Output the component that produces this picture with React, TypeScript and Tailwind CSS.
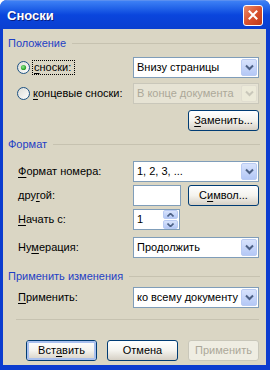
import React from "react";

const U = ({ children }: { children: React.ReactNode }) => (
  <span className="underline underline-offset-[2px] decoration-1">{children}</span>
);

const Chevron = ({ disabled }: { disabled?: boolean }) => (
  <svg width="9" height="7" viewBox="0 0 9 7">
    <path
      d="M1 1.5 L4.5 5 L8 1.5"
      fill="none"
      stroke={disabled ? "#c9c7ba" : "#4d6185"}
      strokeWidth="2"
    />
  </svg>
);

const Combo = ({ text, disabled, w = "w-[126px]" }: { text: string; disabled?: boolean; w?: string }) => (
  <div
    className={`${w} h-[21px] flex items-center border ${
      disabled ? "border-[#c9c7ba] bg-[#e6e3d4] text-[#aca899]" : "border-[#7f9db9] bg-white text-black"
    }`}
  >
    <div className="flex-1 pl-[3px] leading-none whitespace-nowrap overflow-hidden">{text}</div>
    <div
      className={`w-[16px] h-[17px] mr-[1px] rounded-[2px] flex items-center justify-center border ${
        disabled
          ? "border-[#e0ddd0] bg-[#ecead9]"
          : "border-[#b9cbf3] bg-gradient-to-b from-[#d8e3fc] to-[#b4c8f6]"
      }`}
    >
      <Chevron disabled={disabled} />
    </div>
  </div>
);

const Button = ({
  children,
  w = "w-[71px]",
  def,
  disabled,
}: {
  children: React.ReactNode;
  w?: string;
  def?: boolean;
  disabled?: boolean;
}) => (
  <div
    className={`${w} h-[21px] rounded-[3px] border flex items-center justify-center ${
      disabled
        ? "border-[#c9c7ba] bg-[#efede2] text-[#aca899]"
        : "border-[#003c74] bg-gradient-to-b from-white via-[#f4f3ee] to-[#d6d0c5] text-black"
    }`}
  >
    <div
      className={`w-full h-full rounded-[2px] flex items-center justify-center ${
        def ? "border-[2px] border-[#a9c0ee]" : ""
      }`}
    >
      {children}
    </div>
  </div>
);

const Radio = ({ checked }: { checked?: boolean }) => (
  <svg width="13" height="13" viewBox="0 0 13 13">
    <defs>
      <linearGradient id="rg" x1="0" y1="0" x2="1" y2="1">
        <stop offset="0" stopColor="#dcdcd6" />
        <stop offset="1" stopColor="#ffffff" />
      </linearGradient>
      <radialGradient id="dot" cx="0.4" cy="0.4" r="0.6">
        <stop offset="0" stopColor="#8ee88e" />
        <stop offset="1" stopColor="#1e9b1e" />
      </radialGradient>
    </defs>
    <circle cx="6.5" cy="6.5" r="6" fill="url(#rg)" stroke="#1c5180" strokeWidth="1" />
    {checked && <circle cx="6.5" cy="6.5" r="2.6" fill="url(#dot)" />}
  </svg>
);

const Header = ({ children, mt }: { children: React.ReactNode; mt: string }) => (
  <div className={`${mt} h-[14px] flex items-center pl-[5px] pr-[6px]`}>
    <span className="text-[#1f3fc4] whitespace-nowrap leading-none">{children}</span>
    <div className="flex-1 ml-[6px] border-t border-[#c6c2b0]" />
  </div>
);

export default function App() {
  return (
    <div
      className="w-[270px] h-[370px] bg-[#0b3ccf] flex flex-col rounded-t-[7px] overflow-hidden text-[11px]"
      style={{ fontFamily: '"Liberation Sans", Arial, sans-serif' }}
    >
      {/* Title bar */}
      <div className="h-[29px] flex items-center bg-gradient-to-b from-[#3d80f5] via-[#0a45dd] to-[#0a3fd0] pl-[7px] pr-[7px] border-t border-[#5a8ff0]">
        <span
          className="flex-1 text-white font-bold text-[13px] leading-none pt-[1px]"
          style={{ textShadow: "1px 1px 0 #0a1e80" }}
        >
          Сноски
        </span>
        <div className="w-[20px] h-[21px] rounded-[3px] border border-white bg-gradient-to-br from-[#e98a68] via-[#d9522f] to-[#bf3a18] flex items-center justify-center">
          <svg width="10" height="10" viewBox="0 0 10 10">
            <path d="M1.5 1.5 L8.5 8.5 M8.5 1.5 L1.5 8.5" stroke="white" strokeWidth="2" strokeLinecap="square" />
          </svg>
        </div>
      </div>

      {/* Body */}
      <div className="flex-1 flex pl-[3px] pr-[4px] pb-[5px]">
        <div className="flex-1 bg-[#dad6c4] flex flex-col">
          <Header mt="mt-[7px]">Положение</Header>

          <div className="mt-[7px] h-[21px] flex items-center pl-[14px] pr-[7px]">
            <Radio checked />
            <div className="ml-[2px] w-[43px] h-[15px] border border-dotted border-black flex items-center pl-[1px] leading-none">
              <U>с</U>носки:
            </div>
            <div className="flex-1" />
            <Combo text="Внизу страницы" />
          </div>

          <div className="mt-[5px] h-[21px] flex items-center pl-[14px] pr-[7px]">
            <Radio />
            <div className="ml-[3px] leading-none">
              <U>к</U>онцевые сноски:
            </div>
            <div className="flex-1" />
            <Combo text="В конце документа" disabled />
          </div>

          <div className="mt-[6px] h-[21px] flex justify-end pr-[7px]">
            <Button w="w-[71px]">
              <U>З</U>аменить...
            </Button>
          </div>

          <Header mt="mt-[6px]">Формат</Header>

          <div className="mt-[10px] h-[21px] flex items-center pl-[15px] pr-[7px]">
            <div className="flex-1 leading-none">
              <U>Ф</U>ормат номера:
            </div>
            <Combo text="1, 2, 3, ..." />
          </div>

          <div className="mt-[3px] h-[21px] flex items-center pl-[15px] pr-[7px]">
            <div className="flex-1 leading-none">
              дру<U>г</U>ой:
            </div>
            <div className="w-[48px] h-[21px] border border-[#7f9db9] bg-white" />
            <div className="ml-[7px]">
              <Button w="w-[71px]">
                С<U>и</U>мвол...
              </Button>
            </div>
          </div>

          <div className="mt-[3px] h-[21px] flex items-center pl-[15px] pr-[7px]">
            <div className="flex-1 leading-none">
              <U>Н</U>ачать с:
            </div>
            <div className="w-[126px] flex">
              <div className="w-[47px] h-[21px] border border-[#7f9db9] bg-white flex items-center">
                <div className="flex-1 pl-[3px] leading-none">1</div>
                <div className="w-[15px] h-[19px] mr-[1px] flex flex-col gap-[1px]">
                  <div className="flex-1 rounded-[2px] border border-[#b9cbf3] bg-gradient-to-b from-[#d8e3fc] to-[#b4c8f6] flex items-center justify-center">
                    <svg width="7" height="4" viewBox="0 0 7 4">
                      <path d="M0.5 3.5 L3.5 0.5 L6.5 3.5" fill="none" stroke="#4d6185" strokeWidth="1.6" />
                    </svg>
                  </div>
                  <div className="flex-1 rounded-[2px] border border-[#b9cbf3] bg-gradient-to-b from-[#d8e3fc] to-[#b4c8f6] flex items-center justify-center">
                    <svg width="7" height="4" viewBox="0 0 7 4">
                      <path d="M0.5 0.5 L3.5 3.5 L6.5 0.5" fill="none" stroke="#4d6185" strokeWidth="1.6" />
                    </svg>
                  </div>
                </div>
              </div>
            </div>
          </div>

          <div className="mt-[7px] h-[21px] flex items-center pl-[15px] pr-[7px]">
            <div className="flex-1 leading-none">
              Ну<U>м</U>ерация:
            </div>
            <Combo text="Продолжить" />
          </div>

          <Header mt="mt-[11px]">Применить изменения</Header>

          <div className="mt-[4px] h-[21px] flex items-center pl-[15px] pr-[7px]">
            <div className="flex-1 leading-none">
              <U>П</U>рименить:
            </div>
            <Combo text="ко всему документу" />
          </div>

          <div className="mt-[11px] ml-[13px] mr-[7px] border-t border-[#c6c2b0]" />

          <div className="mt-[20px] h-[21px] flex justify-end gap-[10px] pr-[7px]">
            <Button def>
              Вст<U>а</U>вить
            </Button>
            <Button>Отмена</Button>
            <Button disabled>Применить</Button>
          </div>
        </div>
      </div>
    </div>
  );
}
